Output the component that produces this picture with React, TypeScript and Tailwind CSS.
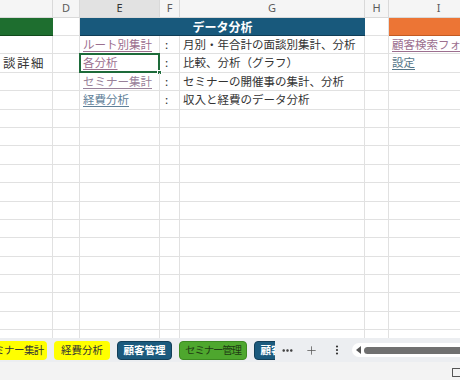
import React from 'react';
import { Ellipsis, Plus, EllipsisVertical } from 'lucide-react';

const line = 'border-r border-b border-[#e1e1e1]';

type Row = {
  left?: string;
  link?: { text: string; color: string };
  colon?: boolean;
  desc?: string;
  right?: { text: string; color: string };
  selected?: boolean;
};

const rows: Row[] = [
  {
    link: { text: 'ルート別集計', color: 'text-[#9c6f8f] decoration-[#9c6f8f]' },
    colon: true,
    desc: '月別・年合計の面談別集計、分析',
    right: { text: '顧客検索フォーム', color: 'text-[#9c6f8f] decoration-[#9c6f8f]' },
  },
  {
    left: '談詳細',
    link: { text: '各分析', color: 'text-[#9c6f8f] decoration-[#9c6f8f]' },
    colon: true,
    desc: '比較、分析（グラフ）',
    right: { text: '設定', color: 'text-[#557688] decoration-[#557688]' },
    selected: true,
  },
  {
    link: { text: 'セミナー集計', color: 'text-[#98819a] decoration-[#98819a]' },
    colon: true,
    desc: 'セミナーの開催事の集計、分析',
  },
  {
    link: { text: '経費分析', color: 'text-[#5f8098] decoration-[#5f8098]' },
    colon: true,
    desc: '収入と経費のデータ分析',
  },
];

const emptyRows = Array.from({ length: 13 }, () => ({} as Row));

const cols = 'grid grid-cols-[53px_27px_80px_20px_185px_24px_100px] w-[489px]';

const SheetRow = ({ row }: { row: Row }) => (
  <div className={`${cols} h-[18.4px] text-[11.5px] leading-none text-[#333]`}>
    <div className={`${line} flex items-center justify-end pr-[7px] overflow-hidden whitespace-nowrap text-[12.5px] tracking-[1.5px]`}>
      {row.left}
    </div>
    <div className={line} />
    <div className={`${line} relative flex items-center pl-[3px] whitespace-nowrap`}>
      {row.link && (
        <span className={`underline underline-offset-[2px] ${row.link.color}`}>{row.link.text}</span>
      )}
      {row.selected && (
        <div className="absolute -left-[1px] -top-[1px] -right-[1px] -bottom-[1px] border-2 border-[#1e6b3a]">
          <div className="absolute -right-[4px] -bottom-[4px] w-[5px] h-[5px] bg-[#1e6b3a] border border-white" />
        </div>
      )}
    </div>
    <div className={`${line} flex items-center pl-[5px]`}>{row.colon ? ':' : ''}</div>
    <div className={`${line} flex items-center pl-[3px] whitespace-nowrap overflow-hidden`}>{row.desc}</div>
    <div className={line} />
    <div className={`${line} flex items-center pl-[3px] whitespace-nowrap overflow-hidden`}>
      {row.right && (
        <span className={`underline underline-offset-[2px] ${row.right.color}`}>{row.right.text}</span>
      )}
    </div>
  </div>
);

const HeaderRow = () => {
  const heads = ['', 'D', 'E', 'F', 'G', 'H', 'I'];
  return (
    <div className={`${cols} h-[18px] bg-[#f5f5f5] text-[11px] text-[#5b5b5b] font-['Noto_Sans',sans-serif]`}>
      {heads.map((h, i) => (
        <div
          key={i}
          className={`flex items-center justify-center border-r border-b border-[#d9d9d9] ${
            h === 'E' ? 'bg-[#e2e2e2] text-[#333]' : ''
          }`}
        >
          {h}
        </div>
      ))}
    </div>
  );
};

const BannerRow = () => (
  <div className={`${cols} h-[18px]`}>
    <div className="bg-[#1e6e2f] border-b border-[#124a1c]" />
    <div className={line} />
    <div className="col-span-3 bg-[#18597c] border-b border-[#0f3d56] flex items-center justify-center text-white font-bold text-[12px] leading-none">
      データ分析
    </div>
    <div className={line} />
    <div className="bg-[#ec7535] border-b border-[#c25a22]" />
  </div>
);

const tabs = [
  { text: 'セミナー集計', w: 'w-[66px] -ml-[19px]', cls: 'bg-[#ffff00] text-[#333] tracking-[-0.6px]' },
  { text: '経費分析', w: 'w-[56px]', cls: 'bg-[#ffff00] text-[#333]' },
  { text: '顧客管理', w: 'w-[55px]', cls: 'bg-[#1b5a7d] text-white font-bold border border-[#123f58]' },
  { text: 'セミナー管理', w: 'w-[68px]', cls: 'bg-[#4ea72e] text-[#1f3d14] tracking-[-1.2px] border border-[#3d8a22]' },
  { text: '顧客分析', w: 'w-[55px]', cls: 'bg-[#1b5a7d] text-white font-bold border border-[#123f58]' },
];

const TabBar = () => (
  <div className="h-[24px] bg-[#eceef1] flex items-center">
    <div className="w-[275px] h-full overflow-hidden flex items-center">
      <div className="flex items-center gap-[7px] shrink-0">
        {tabs.map((t, i) => (
          <div
            key={i}
            className={`${t.w} ${t.cls} shrink-0 h-[19px] rounded-[4px] flex items-center justify-center text-[10.5px] leading-none whitespace-nowrap`}
          >
            {t.text}
          </div>
        ))}
      </div>
    </div>
    <div className="w-[24px] flex justify-center text-[#333]">
      <Ellipsis size={13} strokeWidth={2.6} />
    </div>
    <div className="w-[25px] flex justify-center text-[#555]">
      <Plus size={13} strokeWidth={1.4} />
    </div>
    <div className="w-[25px] flex justify-center text-[#333]">
      <EllipsisVertical size={12} strokeWidth={2.4} />
    </div>
    <div className="ml-[3px] flex-1 h-[14px] bg-white rounded-l-full flex items-center pl-[4px]">
      <div className="w-0 h-0 border-y-[4px] border-y-transparent border-r-[5px] border-r-[#555]" />
      <div className="ml-[3px] flex-1 h-[7px] bg-[#707070] rounded-l-full" />
    </div>
  </div>
);

export default function App() {
  return (
    <div className="w-[460px] h-[380px] overflow-hidden bg-white flex flex-col font-['Noto_Sans_CJK_JP',sans-serif]">
      <div className="h-[338px] overflow-hidden">
        <HeaderRow />
        <BannerRow />
        {[...rows, ...emptyRows].map((r, i) => (
          <SheetRow key={i} row={r} />
        ))}
      </div>
      <TabBar />
      <div className="flex-1 bg-[#f3f3f3] flex justify-end items-center">
        <div className="w-[8px] h-[9px] border border-[#555] border-r-0 rounded-l-[1px] mt-[3px]" />
      </div>
    </div>
  );
}
